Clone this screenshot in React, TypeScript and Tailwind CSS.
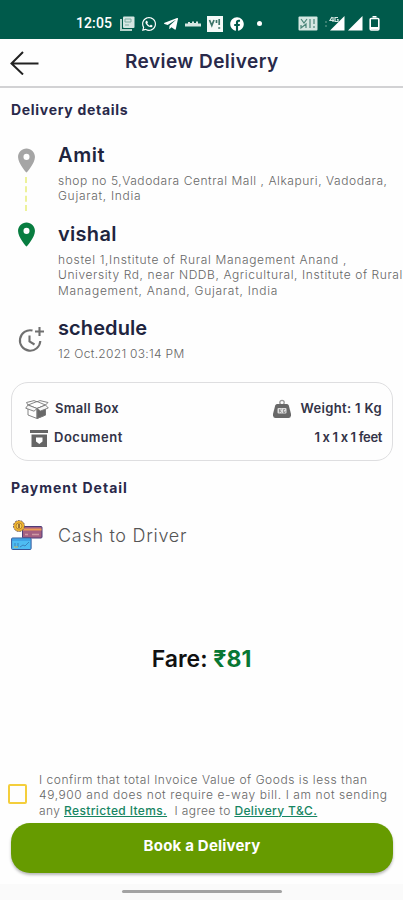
import type { ReactNode } from "react";
import { FaWhatsapp, FaTelegramPlane, FaFacebook } from "react-icons/fa";
import { MdLocationOn } from "react-icons/md";

type StopProps = {
  icon: ReactNode;
  title: string;
  titleClass: string;
  lines: { text: string; className: string }[];
};

function StatusBar() {
  return (
    <div className="flex h-[39px] shrink-0 items-center bg-[#005a4b] pl-[76px] pt-2 text-white">
      <span className="w-[44px] whitespace-nowrap font-[Roboto] text-[14px] font-medium tracking-[0.1px]">
        12:05
      </span>
      <svg className="h-[15px] w-[15px]" viewBox="0 0 15 15" fill="none">
        <path d="M1 3v11h11" stroke="#b5d2cb" strokeWidth="2" />
        <rect x="3" y="0.5" width="11.5" height="11.5" rx="1" fill="#d6e7e3" />
        <path d="M5 3h6v3H5zM5 9h4" stroke="#7fada3" strokeWidth="1" />
      </svg>
      <FaWhatsapp className="ml-[6px] size-4" />
      <FaTelegramPlane className="ml-[6px] size-4" />
      <svg className="ml-[6px] h-[6px] w-[16px]" viewBox="0 0 16 6" fill="#d6e7e3">
        <path d="M0 2.500h3V1h2v1h2V.500h2V2h2V.500h2v2h3v3H0z" />
      </svg>
      <svg className="ml-[6px] h-[16px] w-[16px]" viewBox="0 0 16 16">
        <rect width="16" height="16" fill="#f4faf8" />
        <path d="M2.500 4l2.300 5.500L7 4M9.500 4v3M12.200 3v6M11.200 12h2" stroke="#3c7569" strokeWidth="1.700" fill="none" />
      </svg>
      <FaFacebook className="ml-[7px] size-[14px]" />
      <span className="ml-[13px] size-[5px] rounded-full bg-white" />
      <svg className="ml-[36px] h-[15px] w-[20px]" viewBox="0 0 20 15">
        <rect x="0.5" y="0.5" width="19" height="14" rx="1" fill="#d5e7e2" />
        <path d="M3 3l3 4 3-4M3 9v3l5-4v4M12 3v9M16 3v5M16 10v2" stroke="#4a8579" strokeWidth="1.200" fill="none" />
      </svg>
      <svg className="ml-[6px] h-[15px] w-[21px]" viewBox="0 0 21 15">
        <path d="M20.500 0v14.500H6z" fill="#fff" />
        <path d="M2 5v2M2 9v2" stroke="#4c8b7e" strokeWidth="1.500" />
        <path d="M8 1L6 4.500h4M9 1v5M14 1.500h-3v4h3v-2h-1" stroke="#d5e7e2" strokeWidth="1.200" fill="none" />
      </svg>
      <svg className="ml-[3px] h-[15px] w-[15px]" viewBox="0 0 15 15">
        <path d="M14.500 0v14.500H0z" fill="#fff" />
      </svg>
      <svg className="ml-[6px] h-[15px] w-[11px]" viewBox="0 0 11 15" fill="none">
        <path d="M3.500 0.800h4" stroke="#fff" strokeWidth="1.600" />
        <rect x="1.200" y="2.500" width="8.600" height="11.500" rx="1" stroke="#fff" strokeWidth="1.600" />
        <path d="M2 11h7v2.500H2z" fill="#fff" />
      </svg>
    </div>
  );
}

function Stop({ icon, title, titleClass, lines }: StopProps) {
  return (
    <div className="flex">
      <div className="flex w-[58px] shrink-0 flex-col">{icon}</div>
      <div>
        <h3 className={`whitespace-nowrap pt-px text-[20px] font-semibold leading-[27px] text-[#20243e] ${titleClass}`}>
          {title}
        </h3>
        <div className="mt-1 text-[12px] font-light leading-[15.3px] text-[#666]">
          {lines.map((line) => (
            <p key={line.text} className={`whitespace-nowrap ${line.className}`}>
              {line.text}
            </p>
          ))}
        </div>
      </div>
    </div>
  );
}

function ScheduleIcon() {
  return (
    <svg className="ml-[18px] mt-[12px] h-[27px] w-[27px]" viewBox="0 0 27 27" fill="none" stroke="#707070" strokeWidth="2.100">
      <path d="M14.500 4.600A10.200 10.200 0 1 0 22.300 15" />
      <path d="M11.500 9.500v6l5 3" />
      <path d="M21.500 1v9M17 5.500h9" />
    </svg>
  );
}

function BoxIcon() {
  return (
    <svg className="h-[19px] w-[24px]" viewBox="0 0 24 19" fill="none" stroke="#777" strokeWidth="0.9" strokeLinejoin="round">
      <path d="M3 7v8l9 3.500 8.500-3.500V7" />
      <path d="M12 8.500l8.500-3v9.500L12 18.500z" fill="#686868" />
      <path d="M3 5l9-3.500L20.500 5 12 8.500z" />
      <path d="M3 5L.7 8.200l8.300 3L12 8.500zM20.500 5l2.800 3-7.800 3L12 8.500z" fill="#f7f7f7" />
      <path d="M3 5L1.500 2.500 9 .600 12 1.800M20.500 5L23 2.500 15 .600l-3 1.200M12 9v9" />
    </svg>
  );
}

function DocumentIcon() {
  return (
    <svg className="h-[17px] w-[18px]" viewBox="0 0 18 17">
      <path d="M0 0h18v3H0zM1.500 4.500h15.500v12.500h-15.500z" fill="#666" />
      <path d="M6 7.500h6.500v4l-3.200 2.500L6 11.500z" fill="#fff" />
    </svg>
  );
}

function WeightIcon() {
  return (
    <svg className="h-[20px] w-[18px]" viewBox="0 0 18 20">
      <circle cx="9" cy="3.500" r="2.200" fill="none" stroke="#999" strokeWidth="1.300" />
      <path d="M4 5h10q1.300 0 1.800 1.500L18 15q.3 4-2.500 4h-13Q-.3 19 0 15L2.200 6.500Q2.700 5 4 5z" fill="#686868" />
      <rect x="4.500" y="9" width="9" height="5.500" rx="1" fill="#ddd" />
      <path d="M6.500 10v3.500M8.700 10l-2 1.800 2 1.700M12 10.500h-1.500v3H12v-1.500" stroke="#777" strokeWidth="0.700" fill="none" />
    </svg>
  );
}

function CashIcon() {
  return (
    <svg className="h-[31px] w-[32px]" viewBox="0 0 32 31">
      <rect x="11.500" y="6.500" width="19.500" height="11.500" rx="1" fill="#a45f80" stroke="#4d3d78" />
      <path d="M12 9.500h18.500" stroke="#ed9b55" strokeWidth="2" />
      <path d="M14 14.500h3M21 14.500h7" stroke="#cf9aa4" strokeWidth="1.500" />
      <circle cx="8" cy="6" r="5.500" fill="#efb52f" stroke="#6c5765" strokeDasharray="2 1" />
      <circle cx="8" cy="6" r="3" fill="#f8d45a" stroke="#a76a25" strokeWidth="0.700" />
      <path d="M8 4v4" stroke="#7b512c" strokeWidth="1.500" />
      <rect x="0.600" y="18" width="19.500" height="11.500" rx="1" fill="#4ebcf2" stroke="#35569a" />
      <path d="M1 20h18.500" stroke="#3187d8" />
      <path d="M4 23v4h3v-4M9 27l3-2 2 1 4-4" stroke="#3a83bd" fill="none" />
      <path d="M3 27h4" stroke="#d9cb66" />
    </svg>
  );
}

export default function App() {
  return (
    <div className="flex h-[900px] w-[403px] flex-col overflow-hidden bg-[#fefefe] font-[Inter,sans-serif]">
      <StatusBar />

      <header className="flex h-[49px] shrink-0 items-center border-b-2 border-[#d2d2d4] pl-[10px]">
        <svg className="h-[24px] w-[29px]" viewBox="0 0 29 24" fill="none" stroke="#222" strokeWidth="2">
          <path d="M13 1L1.500 12.500 13 23.500M1.500 12.500h27" />
        </svg>
        <h1 className="ml-[86px] whitespace-nowrap pb-px text-[19px] font-semibold tracking-[0.45px] text-[#29294a]">
          Review Delivery
        </h1>
      </header>

      <h2 className="flex h-[53px] shrink-0 items-start pl-[11px] pt-[12px] text-[14px] font-bold leading-5 tracking-[0.7px] text-[#29294a]">
        Delivery details
      </h2>

      {/* Pickup, drop and schedule */}
      <section className="h-[241px] shrink-0">
        <Stop
          icon={
            <>
              <MdLocationOn className="ml-[12px] mt-[5px] size-[29px] shrink-0 text-[#a5a5a5]" />
              <span className="ml-[25px] mt-[2px] h-[34px] w-0 border-l-2 border-dashed border-[#edf29b]" />
            </>
          }
          title="Amit"
          titleClass="tracking-[0.6px]"
          lines={[
            { text: "shop no 5,Vadodara Central Mall , Alkapuri, Vadodara,", className: "tracking-[0.55px]" },
            { text: "Gujarat, India", className: "tracking-[0.7px]" },
          ]}
        />
        <div className="mt-[9px]">
          <Stop
            icon={<MdLocationOn className="ml-[12px] size-[29px] text-[#087d40]" />}
            title="vishal"
            titleClass="tracking-[0.3px]"
            lines={[
              { text: "hostel 1,Institute of Rural Management Anand ,", className: "tracking-[0.67px]" },
              { text: "University Rd, near NDDB, Agricultural, Institute of Rural", className: "tracking-[0.59px]" },
              { text: "Management, Anand, Gujarat, India", className: "tracking-[0.72px]" },
            ]}
          />
        </div>
        <div className="mt-[16px]">
          <Stop
            icon={<ScheduleIcon />}
            title="schedule"
            titleClass="tracking-[0.1px]"
            lines={[{ text: "12 Oct.2021 03:14 PM", className: "tracking-[0.3px]" }]}
          />
        </div>
      </section>

      <section className="ml-[11px] mr-[10px] flex h-[79px] shrink-0 flex-col rounded-[17px] border border-[#dedee0] pl-[13px] pr-[10px] pt-[16px] text-[13px] font-semibold text-[#333347]">
        <div className="flex h-[20px] items-center">
          <BoxIcon />
          <span className="ml-[6px] whitespace-nowrap tracking-[0.3px]">Small Box</span>
          <span className="ml-auto flex items-center gap-[9px] whitespace-nowrap tracking-[0.35px]">
            <WeightIcon />
            Weight: 1 Kg
          </span>
        </div>
        <div className="mt-[9px] flex h-[20px] items-center pl-[5px]">
          <DocumentIcon />
          <span className="ml-[6px] whitespace-nowrap tracking-[0.5px]">Document</span>
          <span className="ml-auto whitespace-nowrap tracking-[-0.35px]">1 x 1 x 1 feet</span>
        </div>
      </section>

      <h2 className="mt-[17px] h-5 shrink-0 pl-[11px] text-[14px] font-bold leading-5 tracking-[1px] text-[#29294a]">
        Payment Detail
      </h2>

      <div className="mt-[21px] flex h-[32px] shrink-0 items-center pl-[11px]">
        <CashIcon />
        <span className="ml-[15px] whitespace-nowrap text-[18px] font-light tracking-[0.7px] text-[#555]">
          Cash to Driver
        </span>
      </div>

      <p className="mt-[92px] h-[32px] shrink-0 whitespace-nowrap text-center text-[23px] font-semibold leading-8 text-[#111]">
        Fare: <span className="font-bold text-[#087733]">₹81</span>
      </p>

      <div className="mt-[97px] flex h-[51px] shrink-0 items-start">
        <span className="ml-[8px] mt-[12px] h-[20px] w-[19px] shrink-0 rounded-[2px] border-2 border-[#f4ce3c]" />
        <div className="ml-[12px] text-[12px] font-light leading-[15.3px] text-[#666]">
          <p className="whitespace-nowrap tracking-[0.54px]">I confirm that total Invoice Value of Goods is less than</p>
          <p className="whitespace-nowrap tracking-[0.59px]">49,900 and does not require e-way bill. I am not sending</p>
          <p className="whitespace-nowrap tracking-[0.37px]">
            any <a className="font-medium text-[#178562] underline">Restricted Items.</a>&nbsp; I agree to{" "}
            <a className="font-medium text-[#178562] underline">Delivery T&amp;C.</a>
          </p>
        </div>
      </div>

      <button className="ml-[11px] mr-[10px] h-[50px] shrink-0 rounded-[19px] bg-[#669b00] pb-[3px] text-[15px] font-bold tracking-[0.2px] text-white shadow-[0_2px_3px_rgba(0,0,0,0.28)]">
        Book a Delivery
      </button>

      <div className="mt-[11px] flex flex-1 justify-center bg-[#fafafa] pt-[6px]">
        <span className="h-[3px] w-[160px] rounded-full bg-[#a3a3a3]" />
      </div>
    </div>
  );
}
